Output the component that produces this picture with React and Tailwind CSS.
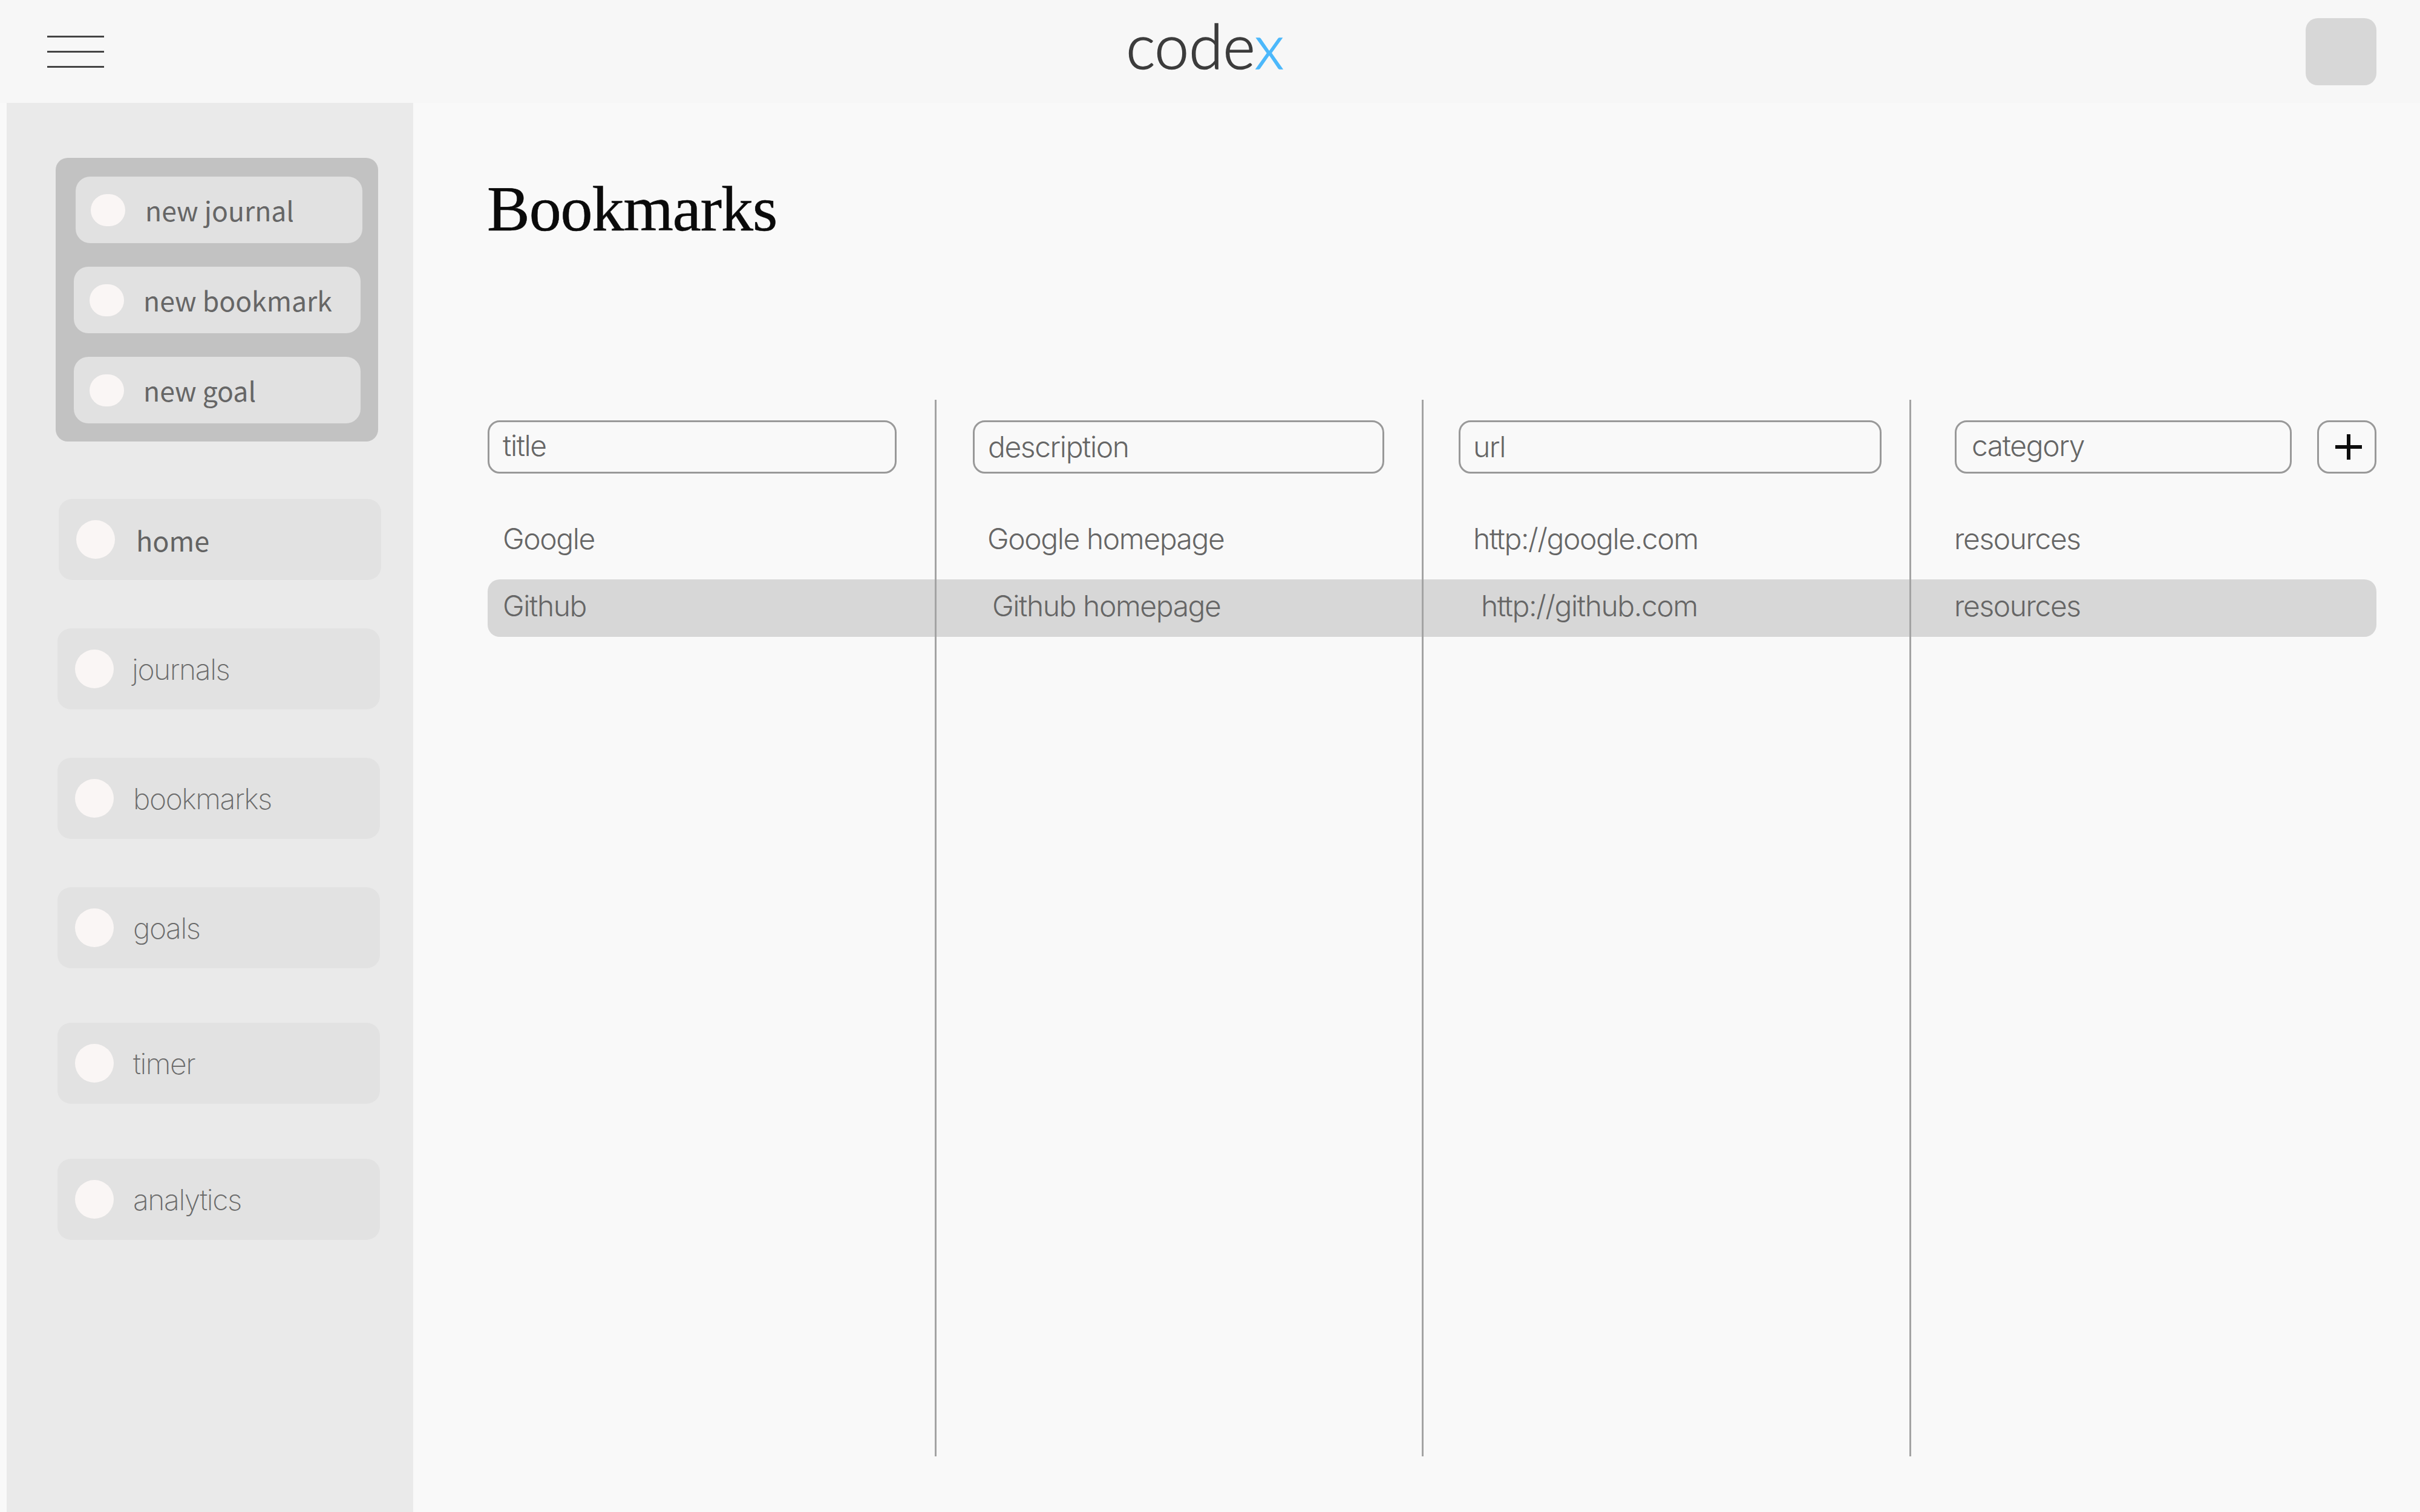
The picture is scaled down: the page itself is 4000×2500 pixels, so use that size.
function Quick({ label, first }) {
  return (
    <div className={`flex h-[110px] w-[474px] items-center rounded-[24px] bg-[#e1e1e1] ${first ? "ml-[33px] pl-[25px]" : "ml-[30px] pl-[26px]"}`}>
      <span className="h-[53px] w-[57px] shrink-0 rounded-full bg-[#faf6f5]" />
      <span className={`${first ? "ml-[33px]" : "ml-[32px]"} font-['Noto_Sans_CJK_SC','Noto_Sans',sans-serif] text-[44.5px] leading-none whitespace-nowrap text-[#666666]`}>{label}</span>
    </div>
  );
}

function Nav({ label, active, gap }) {
  return (
    <div className={`flex h-[134px] w-[533px] items-center rounded-[22px] bg-[#e2e2e2] pl-[29px] ${active ? "ml-[5px]" : "ml-[3px]"}`}>
      <span className="h-[64px] w-[64px] shrink-0 rounded-full bg-[#faf6f5]" />
      {active ? (
        <span className="ml-[35px] font-['Noto_Sans_CJK_SC','Noto_Sans',sans-serif] text-[45px] leading-none text-[#636363]">{label}</span>
      ) : (
        <span className={`${gap} pt-[2px] font-['Inter',sans-serif] text-[48px] leading-none font-extralight tracking-[-0.03em] text-[#6b6b6b]`}>{label}</span>
      )}
    </div>
  );
}

function Field({ label, className }) {
  return (
    <div className={`flex h-[88px] items-center rounded-[20px] border-[3px] border-[#999999] bg-[#f9f9f9] font-['Inter',sans-serif] text-[48px] font-light tracking-[-0.03em] text-[#666666] ${className}`}>
      {label}
    </div>
  );
}

function Cell({ children, className }) {
  return <div className={`shrink-0 font-['Inter',sans-serif] text-[48px] font-light tracking-[-0.03em] text-[#666666] ${className}`}>{children}</div>;
}

export default function App() {
  return (
    <div className="flex h-[2500px] w-[4000px] flex-col bg-[#f9f9f9]">
      <header className="flex h-[170px] shrink-0 items-center justify-between bg-[#f7f7f7] pr-[72px] pl-[78px]">
        <div className="flex w-[94px] flex-col gap-[22px]">
          <div className="h-[3px] bg-[#444444]" />
          <div className="h-[3px] bg-[#444444]" />
          <div className="h-[3px] bg-[#444444]" />
        </div>
        <div className="pb-[20px] font-['Lato',sans-serif] text-[102px] leading-none font-light text-[#3c3c3c] [-webkit-text-stroke-width:1.5px]">
          code<span className="text-[#4cb8fb]">x</span>
        </div>
        <div className="h-[111px] w-[117px] rounded-[20px] bg-[#d7d7d7]" />
      </header>
      <div className="flex min-h-0 flex-1">
        <aside className="ml-[11px] w-[672px] shrink-0 bg-[#eaeaea] pt-[91px] pl-[81px]">
          <div className="flex h-[469px] w-[533px] flex-col gap-[39px] rounded-[20px] bg-[#c2c2c2] pt-[31px]">
            <Quick label="new journal" first />
            <Quick label="new bookmark" />
            <Quick label="new goal" />
          </div>
          <div className="mt-[95px] flex flex-col">
            <Nav label="home" active />
            <div className="mt-[80px]"><Nav label="journals" gap="ml-[30px]" /></div>
            <div className="mt-[80px]"><Nav label="bookmarks" gap="ml-[32px]" /></div>
            <div className="mt-[80px]"><Nav label="goals" gap="ml-[32px]" /></div>
            <div className="mt-[90px]"><Nav label="timer" gap="ml-[32px]" /></div>
            <div className="mt-[91px]"><Nav label="analytics" gap="ml-[32px]" /></div>
          </div>
        </aside>
        <main className="min-w-0 flex-1 pt-[106px] pl-[122px]">
          <h1 className="font-['Liberation_Serif',serif] text-[106px] leading-[140px] font-normal tracking-[-0.01em] text-[#0a0a0a] [-webkit-text-stroke-width:0.6px]">Bookmarks</h1>
          <div className="relative mt-[245px] ml-[1px] h-[1747px] w-[3122px] pt-[34px]">
            <div className="flex">
              <Field label="title" className="w-[676px] pb-[4px] pl-[22px]" />
              <Field label="description" className="ml-[126px] w-[680px] pl-[22px]" />
              <Field label="url" className="ml-[123px] w-[699px] pl-[21px]" />
              <Field label="category" className="ml-[121px] w-[557px] pb-[4px] pl-[25px]" />
              <div className="ml-[42px] flex h-[88px] w-[98px] items-center justify-center rounded-[20px] border-[3px] border-[#999999]">
                <svg width="46" height="46" viewBox="0 0 46 46" fill="none" stroke="#0d0d0d" strokeWidth="6" className="ml-[5px]">
                  <path d="M1 23H45M23 2V44" />
                </svg>
              </div>
            </div>
            <div className="mt-[64px] flex h-[88px] items-center pl-[25px]">
              <Cell className="w-[801px]">Google</Cell>
              <Cell className="w-[803px]">Google homepage</Cell>
              <Cell className="w-[795px]">http://google.com</Cell>
              <Cell>resources</Cell>
            </div>
            <div className="mt-[23px] flex h-[95px] items-center rounded-[20px] bg-[#d7d7d7] pb-[8px] pl-[25px]">
              <Cell className="w-[809px]">Github</Cell>
              <Cell className="w-[808px]">Github homepage</Cell>
              <Cell className="w-[782px]">http://github.com</Cell>
              <Cell>resources</Cell>
            </div>
            <div className="absolute top-0 bottom-0 left-[739px] w-[3px] bg-[#a3a3a3]" />
            <div className="absolute top-0 bottom-0 left-[1544px] w-[3px] bg-[#a3a3a3]" />
            <div className="absolute top-0 bottom-0 left-[2350px] w-[3px] bg-[#a3a3a3]" />
          </div>
        </main>
      </div>
    </div>
  );
}
